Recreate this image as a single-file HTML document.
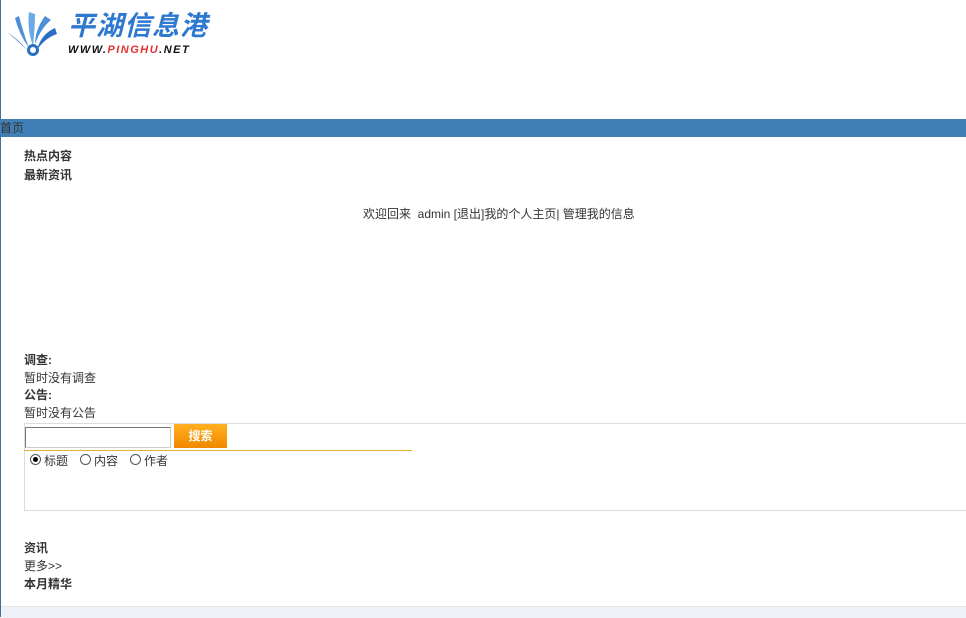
<!DOCTYPE html>
<html><head><meta charset="utf-8"><style>
body{margin:0;width:966px;height:617px;position:relative;overflow:hidden;background:#fff;font-family:"Liberation Sans","Noto Sans CJK SC",sans-serif;font-size:12px;color:#333}
.a{position:absolute;white-space:nowrap;line-height:16px}
.r{position:absolute;top:454px;width:9px;height:9px;border:1px solid #555;border-radius:50%}
</style></head><body>
<div class="a" style="left:0;top:0;width:1px;height:617px;background:#3f6f9f"></div>
<svg class="a" style="left:5px;top:10px" width="52" height="48" viewBox="0 0 52 48">
<path d="M2 22 Q12 30 22 40 Q14 30 2 22Z" fill="#2a6fc0"/>
<path d="M10 8 Q14 24 24 38 Q18 22 14 6Z" fill="#4a8fd8"/>
<path d="M24 2 Q22 20 28 36 Q30 18 30 4Z" fill="#6aaae6"/>
<path d="M40 6 Q30 20 30 34 Q36 18 46 10Z" fill="#4a8fd8"/>
<path d="M50 18 Q36 24 32 40 Q40 28 52 24Z" fill="#2a6fc0"/>
<circle cx="28" cy="40" r="6" fill="#2a6fc0"/><circle cx="28" cy="40" r="3" fill="#fff"/>
</svg>
<div class="a" style="left:68px;top:11px;font-size:27px;line-height:30px;font-weight:bold;font-style:italic;color:#2f78d0;letter-spacing:1px">平湖信息港</div>
<div class="a" style="left:68px;top:42px;font-size:11px;font-weight:bold;font-style:italic;color:#111;letter-spacing:1.5px">WWW.<span style="color:#e03030">PINGHU</span>.NET</div>
<div class="a" style="left:0;top:119px;width:966px;height:18px;background:#3f7fb5"></div>
<div class="a" style="left:0;top:120px;color:#333">首页</div>
<div class="a" style="left:24px;top:148px;font-weight:bold">热点内容</div>
<div class="a" style="left:24px;top:167px;font-weight:bold">最新资讯</div>
<div class="a" style="left:363px;top:206px">欢迎回来&nbsp; admin [退出]我的个人主页| 管理我的信息</div>
<div class="a" style="left:24px;top:352px;font-weight:bold">调查:</div>
<div class="a" style="left:24px;top:370px">暂时没有调查</div>
<div class="a" style="left:24px;top:387px;font-weight:bold">公告:</div>
<div class="a" style="left:24px;top:405px">暂时没有公告</div>
<div class="a" style="left:24px;top:423px;width:945px;height:86px;border:1px solid #ddd"></div>
<div class="a" style="left:25px;top:427px;width:144px;height:19px;border:1px solid #888;border-color:#777 #ccc #ccc #777"></div>
<div class="a" style="left:174px;top:424px;width:53px;height:24px;background:linear-gradient(#ffb020,#f08800);color:#fff;font-weight:bold;text-align:center;line-height:24px">搜索</div>
<div class="a" style="left:24px;top:450px;width:388px;height:1px;background:#e0b030"></div>
<div class="r" style="left:30px"><span style="position:absolute;left:2px;top:2px;width:5px;height:5px;border-radius:50%;background:#000"></span></div>
<div class="a" style="left:44px;top:453px">标题</div>
<div class="r" style="left:80px"></div>
<div class="a" style="left:94px;top:453px">内容</div>
<div class="r" style="left:130px"></div>
<div class="a" style="left:144px;top:453px">作者</div>
<div class="a" style="left:24px;top:540px;font-weight:bold">资讯</div>
<div class="a" style="left:24px;top:558px">更多&gt;&gt;</div>
<div class="a" style="left:24px;top:576px;font-weight:bold">本月精华</div>
<div class="a" style="left:1px;top:606px;width:965px;height:11px;background:#eef2f6;border-top:1px solid #e4e8ec"></div>
</body></html>
